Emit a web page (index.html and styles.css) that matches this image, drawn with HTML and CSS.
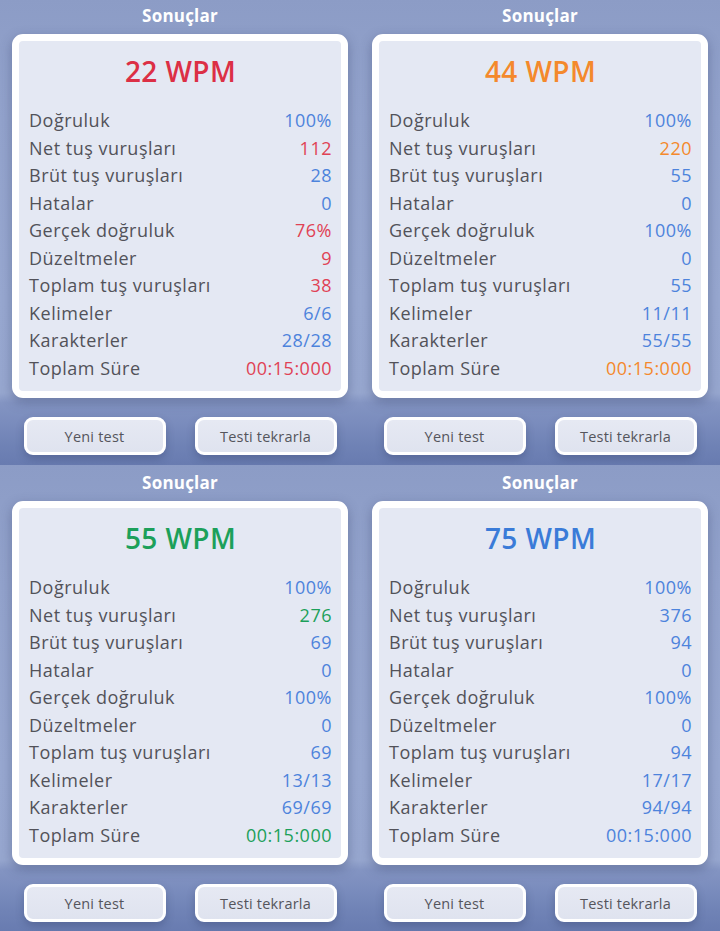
FILE: index.html
```html
<!DOCTYPE html>
<html lang="tr">
<head>
  <meta charset="UTF-8">
  <meta name="viewport" content="width=device-width, initial-scale=1.0">
  <title>Sonuçlar</title>
  <link rel="stylesheet" href="styles.css">
</head>
<body>
  <div id="grid">

    <div class="panel">
      <div class="title">Sonuçlar</div>
      <div class="card">
        <div class="wpm red">22 WPM</div>
        <div class="stats">
          <div class="row"><span class="label">Doğruluk</span><span class="value blue">100%</span></div>
          <div class="row"><span class="label">Net tuş vuruşları</span><span class="value red">112</span></div>
          <div class="row"><span class="label">Brüt tuş vuruşları</span><span class="value blue">28</span></div>
          <div class="row"><span class="label">Hatalar</span><span class="value blue">0</span></div>
          <div class="row"><span class="label">Gerçek doğruluk</span><span class="value red">76%</span></div>
          <div class="row"><span class="label">Düzeltmeler</span><span class="value red">9</span></div>
          <div class="row"><span class="label">Toplam tuş vuruşları</span><span class="value red">38</span></div>
          <div class="row"><span class="label">Kelimeler</span><span class="value blue">6/6</span></div>
          <div class="row"><span class="label">Karakterler</span><span class="value blue">28/28</span></div>
          <div class="row"><span class="label">Toplam Süre</span><span class="value red">00:15:000</span></div>
        </div>
      </div>
      <div class="actions">
        <button class="btn">Yeni test</button>
        <button class="btn">Testi tekrarla</button>
      </div>
    </div>

    <div class="panel">
      <div class="title">Sonuçlar</div>
      <div class="card">
        <div class="wpm orange">44 WPM</div>
        <div class="stats">
          <div class="row"><span class="label">Doğruluk</span><span class="value blue">100%</span></div>
          <div class="row"><span class="label">Net tuş vuruşları</span><span class="value orange">220</span></div>
          <div class="row"><span class="label">Brüt tuş vuruşları</span><span class="value blue">55</span></div>
          <div class="row"><span class="label">Hatalar</span><span class="value blue">0</span></div>
          <div class="row"><span class="label">Gerçek doğruluk</span><span class="value blue">100%</span></div>
          <div class="row"><span class="label">Düzeltmeler</span><span class="value blue">0</span></div>
          <div class="row"><span class="label">Toplam tuş vuruşları</span><span class="value blue">55</span></div>
          <div class="row"><span class="label">Kelimeler</span><span class="value blue">11/11</span></div>
          <div class="row"><span class="label">Karakterler</span><span class="value blue">55/55</span></div>
          <div class="row"><span class="label">Toplam Süre</span><span class="value orange">00:15:000</span></div>
        </div>
      </div>
      <div class="actions">
        <button class="btn">Yeni test</button>
        <button class="btn">Testi tekrarla</button>
      </div>
    </div>

    <div class="panel">
      <div class="title">Sonuçlar</div>
      <div class="card">
        <div class="wpm green">55 WPM</div>
        <div class="stats">
          <div class="row"><span class="label">Doğruluk</span><span class="value blue">100%</span></div>
          <div class="row"><span class="label">Net tuş vuruşları</span><span class="value green">276</span></div>
          <div class="row"><span class="label">Brüt tuş vuruşları</span><span class="value blue">69</span></div>
          <div class="row"><span class="label">Hatalar</span><span class="value blue">0</span></div>
          <div class="row"><span class="label">Gerçek doğruluk</span><span class="value blue">100%</span></div>
          <div class="row"><span class="label">Düzeltmeler</span><span class="value blue">0</span></div>
          <div class="row"><span class="label">Toplam tuş vuruşları</span><span class="value blue">69</span></div>
          <div class="row"><span class="label">Kelimeler</span><span class="value blue">13/13</span></div>
          <div class="row"><span class="label">Karakterler</span><span class="value blue">69/69</span></div>
          <div class="row"><span class="label">Toplam Süre</span><span class="value green">00:15:000</span></div>
        </div>
      </div>
      <div class="actions">
        <button class="btn">Yeni test</button>
        <button class="btn">Testi tekrarla</button>
      </div>
    </div>

    <div class="panel">
      <div class="title">Sonuçlar</div>
      <div class="card">
        <div class="wpm sky">75 WPM</div>
        <div class="stats">
          <div class="row"><span class="label">Doğruluk</span><span class="value blue">100%</span></div>
          <div class="row"><span class="label">Net tuş vuruşları</span><span class="value blue">376</span></div>
          <div class="row"><span class="label">Brüt tuş vuruşları</span><span class="value blue">94</span></div>
          <div class="row"><span class="label">Hatalar</span><span class="value blue">0</span></div>
          <div class="row"><span class="label">Gerçek doğruluk</span><span class="value blue">100%</span></div>
          <div class="row"><span class="label">Düzeltmeler</span><span class="value blue">0</span></div>
          <div class="row"><span class="label">Toplam tuş vuruşları</span><span class="value blue">94</span></div>
          <div class="row"><span class="label">Kelimeler</span><span class="value blue">17/17</span></div>
          <div class="row"><span class="label">Karakterler</span><span class="value blue">94/94</span></div>
          <div class="row"><span class="label">Toplam Süre</span><span class="value blue">00:15:000</span></div>
        </div>
      </div>
      <div class="actions">
        <button class="btn">Yeni test</button>
        <button class="btn">Testi tekrarla</button>
      </div>
    </div>

  </div>
</body>
</html>
```

FILE: styles.css
```css
body {
  margin: 0;
  padding: 0;
  overflow: hidden;
  font-family: 'Open Sans', 'DejaVu Sans', sans-serif;
  background-color: #8e9ec8;
}

#grid {
  display: grid;
  grid-template-columns: 360px 360px;
  grid-template-rows: 467px 467px;
  margin-top: -2px;
}

.panel {
  display: flex;
  flex-direction: column;
  align-items: center;
  background:
    linear-gradient(180deg,
      #8c9cc6 0px,
      #93a3cc 120px,
      #98a8d0 300px,
      #97a7cf 395px,
      #8394c2 405px,
      #7a8cbd 425px,
      #7083b6 445px,
      #687bb0 467px);
}

.title {
  height: 36px;
  line-height: 36px;
  color: #fff;
  font-size: 17px;
  font-weight: 700;
  letter-spacing: 0.2px;
}

.card {
  box-sizing: border-box;
  width: 336px;
  height: 364px;
  border: 7px solid #fff;
  border-radius: 11px;
  background-color: #e4e8f3;
  padding: 0 9px 0 10px;
  box-shadow: 0 4px 12px rgba(40, 52, 92, 0.35);
}

.wpm {
  padding-top: 12px;
  height: 36px;
  line-height: 36px;
  text-align: center;
  font-size: 28px;
  font-weight: 600;
  letter-spacing: 0.4px;
  margin-bottom: 18px;
}

.row {
  display: flex;
  justify-content: space-between;
  height: 27.5px;
  line-height: 27.5px;
  font-size: 18px;
  letter-spacing: 0.5px;
}

.label {
  color: #525259;
}

.red { color: #dc2f45; }
.orange { color: #f4892c; }
.green { color: #1ca05a; }
.sky { color: #3a7bd8; }
.blue { color: #4d83dc; }

.value.red { color: #e04255; }

.actions {
  display: flex;
  gap: 29px;
  margin-top: 19px;
}

.btn {
  box-sizing: border-box;
  width: 142px;
  height: 38px;
  border: 3px solid #fff;
  border-radius: 9px;
  background: linear-gradient(180deg, #e6e9f3, #dfe3ef);
  color: #55555c;
  font-family: 'Open Sans', 'DejaVu Sans', sans-serif;
  font-size: 14.5px;
  letter-spacing: 0.2px;
  cursor: pointer;
  box-shadow: 0 4px 8px rgba(40, 52, 92, 0.3);
}
```
